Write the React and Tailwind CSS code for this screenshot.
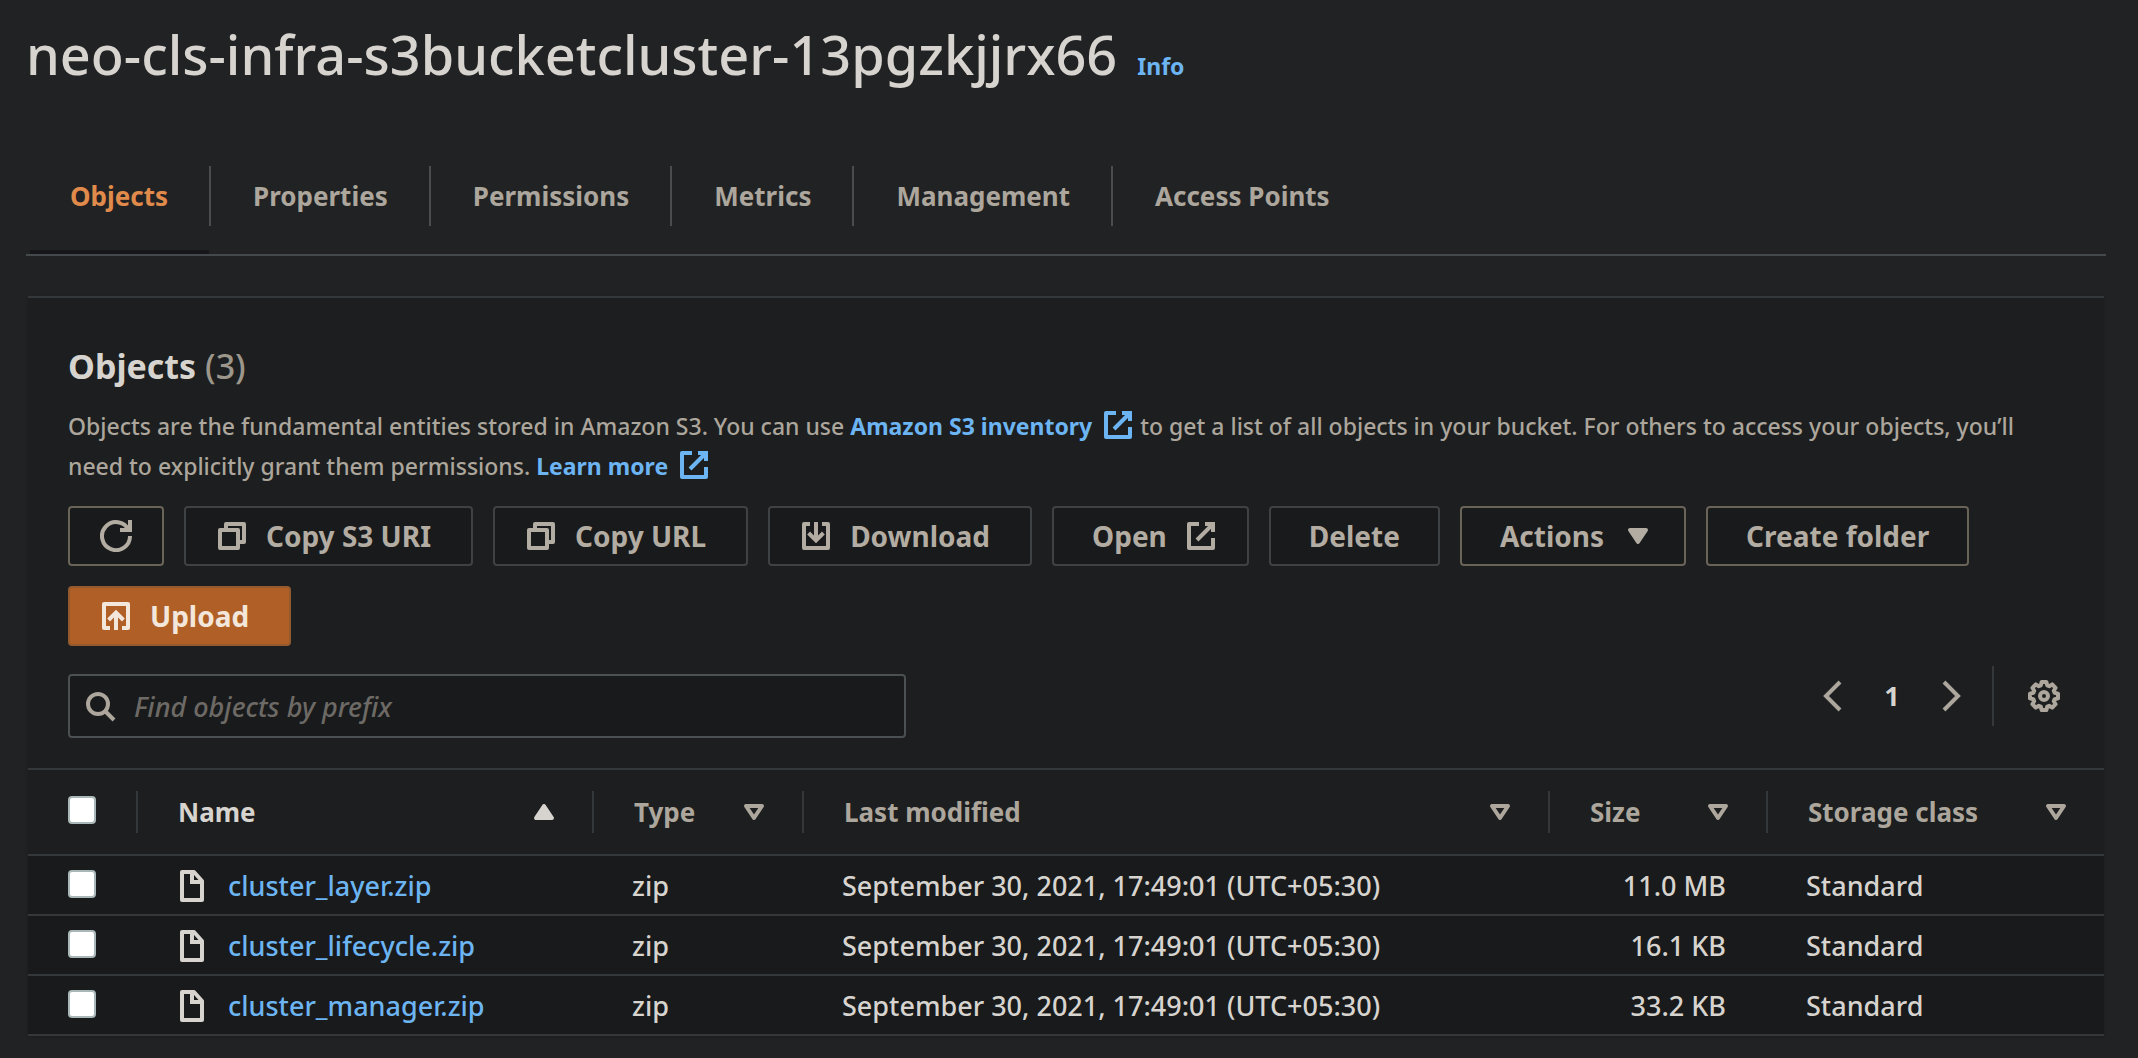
import { useState } from "react";

const TABS = ["Objects", "Properties", "Permissions", "Metrics", "Management", "Access Points"];

const COLUMNS = [
  { label: "Name", sorted: true },
  { label: "Type" },
  { label: "Last modified" },
  { label: "Size" },
  { label: "Storage class" },
];

const OBJECTS = [
  { name: "cluster_layer.zip", type: "zip", modified: "September 30, 2021, 17:49:01 (UTC+05:30)", size: "11.0 MB", storage: "Standard" },
  { name: "cluster_lifecycle.zip", type: "zip", modified: "September 30, 2021, 17:49:01 (UTC+05:30)", size: "16.1 KB", storage: "Standard" },
  { name: "cluster_manager.zip", type: "zip", modified: "September 30, 2021, 17:49:01 (UTC+05:30)", size: "33.2 KB", storage: "Standard" },
];

function Icon({ children, className = "" }) {
  return (
    <svg
      viewBox="0 0 16 16"
      fill="none"
      stroke="currentColor"
      strokeWidth="2"
      aria-hidden="true"
      className={`size-8 shrink-0 ${className}`}
    >
      {children}
    </svg>
  );
}

const RefreshIcon = () => (
  <Icon>
    <path d="M10 5h5V0" />
    <path d="M15 8a7 7 0 1 1-.7-3" />
  </Icon>
);

const CopyIcon = () => (
  <Icon>
    <path d="M2 5h9v9H2z" strokeLinejoin="round" />
    <path d="M5 5V2h9v9h-3" strokeLinejoin="round" />
  </Icon>
);

const DownloadIcon = () => (
  <Icon>
    <path d="M5 2H2v12h12V2h-3" strokeLinejoin="round" />
    <path d="M8 1v9M4.300 6.500 8 10.200l3.700-3.700" />
  </Icon>
);

const UploadIcon = () => (
  <Icon>
    <path d="M5 14H2V2h12v12h-3" strokeLinejoin="round" />
    <path d="M8 15V6.500M4.300 10 8 6.300l3.700 3.700" />
  </Icon>
);

const ExternalIcon = ({ className }) => (
  <Icon className={className}>
    <path d="M7 2H2v12h12V9" strokeLinejoin="round" />
    <path d="M10 2h4v4M6 10l8-8" />
  </Icon>
);

const CaretIcon = ({ up, filled }) => (
  <Icon>
    <path
      d={up ? "M4 11h8L8 5z" : "M4 5h8l-4 6z"}
      fill={filled ? "currentColor" : "none"}
      strokeLinejoin="round"
    />
  </Icon>
);

const SearchIcon = ({ className }) => (
  <Icon className={className}>
    <circle cx="7" cy="7" r="5" />
    <path d="m15 15-4.500-4.500" />
  </Icon>
);

const FileIcon = () => (
  <Icon>
    <path d="M13 15H3V1h6l4 4.500z" strokeLinejoin="round" />
    <path d="M8 1v5h5" />
  </Icon>
);

const GearIcon = () => (
  <Icon>
    <circle cx="8" cy="8" r="2" />
    <path
      d="M6.800 1h2.400l.4 1.700 1 .4 1.500-.9 1.700 1.700-.9 1.500.4 1 1.700.4v2.400l-1.700.4-.4 1 .9 1.500-1.700 1.700-1.500-.9-1 .4-.4 1.700H6.800l-.4-1.700-1-.4-1.500.9-1.700-1.700.9-1.500-.4-1L1 9.200V6.800l1.700-.4.4-1-.9-1.500 1.700-1.700 1.500.9 1-.4z"
      strokeLinejoin="round"
    />
  </Icon>
);

function Button({ children, disabled, className = "", ...props }) {
  return (
    <button
      type="button"
      disabled={disabled}
      className={`flex h-15 items-center gap-[18px] rounded-sm border-2 bg-[#191a1b] text-[28px] font-bold text-[#b2aca2] ${
        disabled ? "border-[#3f4244]" : "border-[#696358]"
      } ${className}`}
      {...props}
    >
      {children}
    </button>
  );
}

function Checkbox({ label }) {
  return (
    <input
      type="checkbox"
      aria-label={label}
      className="block size-7 appearance-none rounded-sm border-2 border-[#aab7b8] bg-white checked:bg-[#6cb5f2]"
    />
  );
}

export default function App() {
  const [tab, setTab] = useState("Objects");
  const [prefix, setPrefix] = useState("");

  const rows = OBJECTS.filter((o) => o.name.startsWith(prefix));

  return (
    <div className="min-h-screen bg-[#212224] pr-8 pl-[26px] font-['Noto_Sans',sans-serif] font-medium text-[#d7d4cf]">
      <header className="flex items-baseline gap-5 pt-[18px]">
        <h1 className="text-[54px] leading-[72px] font-medium">neo-cls-infra-s3bucketcluster-13pgzkjjrx66</h1>
        <a href="#info" className="text-[23px] font-bold text-[#6cb5f2]">
          Info
        </a>
      </header>

      <nav role="tablist" className="mt-[76px] flex border-b-2 border-[#444a4c]">
        {TABS.map((t) => (
          <button
            key={t}
            type="button"
            role="tab"
            aria-selected={t === tab}
            onClick={() => setTab(t)}
            className={`group ml-1 flex h-[88px] items-start border-b-4 text-[26px] font-bold ${
              t === tab ? "border-[#16171b] text-[#e08a4b]" : "border-transparent text-[#aca69c]"
            }`}
          >
            <span className="-mr-[2px] flex h-15 items-center border-r-2 border-[#4a4c4d] pr-[41px] pl-10 group-last:border-transparent">
              {t}
            </span>
          </button>
        ))}
      </nav>

      <main className="mt-10 mr-[2px] ml-[2px] border-t-2 border-[#35383a] bg-[#1c1e1f] shadow-sm">
        <div className="px-10 pt-[42px]">
          <h2 className="text-[34px] leading-[52px] font-bold">
            Objects <span className="font-medium text-[#9c968b]">(3)</span>
          </h2>
          <p className="mt-[14px] text-[23px] leading-10 text-[#aca69c]">
            Objects are the fundamental entities stored in Amazon S3. You can use{" "}
            <a href="#inventory" className="font-bold text-[#6cb5f2]">
              Amazon S3 inventory <ExternalIcon className="-mt-1 mb-1 ml-1 inline" />
            </a>{" "}
            to get a list of all objects in your bucket. For others to access your objects, you’ll need to
            explicitly grant them permissions.{" "}
            <a href="#learn" className="font-bold text-[#6cb5f2]">
              Learn more <ExternalIcon className="-mt-1 mb-1 ml-1 inline" />
            </a>
          </p>

          <div className="mt-5 flex flex-wrap gap-5">
            <Button aria-label="Refresh" className="px-[30px]">
              <RefreshIcon />
            </Button>
            <Button disabled className="pr-10 pl-[30px]">
              <CopyIcon />
              Copy S3 URI
            </Button>
            <Button disabled className="pr-10 pl-[30px]">
              <CopyIcon />
              Copy URL
            </Button>
            <Button disabled className="pr-10 pl-[30px]">
              <DownloadIcon />
              Download
            </Button>
            <Button disabled className="pr-[30px] pl-[38px]">
              Open
              <ExternalIcon />
            </Button>
            <Button disabled className="px-[38px]">
              Delete
            </Button>
            <Button className="pr-[30px] pl-[38px]">
              Actions
              <CaretIcon filled />
            </Button>
            <Button className="px-[38px]">Create folder</Button>
            <button
              type="button"
              className="flex h-15 items-center gap-[18px] rounded-sm border-2 border-[#94592d] bg-[#b06027] pr-10 pl-[30px] text-[28px] font-bold text-[#f3e6db]"
            >
              <UploadIcon />
              Upload
            </button>
          </div>

          <div className="mt-5 flex items-start justify-between pb-[30px]">
            <label className="mt-2 flex h-16 w-[838px] items-center gap-[18px] rounded-sm border-2 border-[#4b5052] bg-[#191a1b] px-[14px]">
              <SearchIcon className="text-[#aca69c]" />
              <input
                type="text"
                aria-label="Find objects by prefix"
                value={prefix}
                onChange={(e) => setPrefix(e.target.value)}
                placeholder="Find objects by prefix"
                className="min-w-0 flex-1 bg-transparent pt-[2px] text-[27px] outline-none placeholder:text-[#6d6a66] placeholder:italic"
              />
            </label>
            <div className="flex h-15 items-center text-[#aca69c]">
              <button type="button" aria-label="Previous page">
                <Icon>
                  <path d="M12 1 5 8l7 7" />
                </Icon>
              </button>
              <span className="w-[88px] text-center text-[27px] font-bold text-[#d7d4cf]">1</span>
              <button type="button" aria-label="Next page">
                <Icon>
                  <path d="m4 1 7 7-7 7" />
                </Icon>
              </button>
              <span className="ml-6 h-full w-[2px] bg-[#35383a]" />
              <button type="button" aria-label="Preferences" className="mr-1 ml-[34px]">
                <GearIcon />
              </button>
            </div>
          </div>
        </div>

        <table className="w-full table-fixed border-t-2 border-[#35383a] text-left text-[27px]">
          <colgroup>
            <col className="w-[110px]" />
            <col className="w-[456px]" />
            <col className="w-[210px]" />
            <col />
            <col className="w-[218px]" />
            <col className="w-[336px]" />
          </colgroup>
          <thead className="text-[26px]">
            <tr className="h-[86px] border-b-2 border-[#35383a]">
              <th className="p-0">
                <div className="flex h-[42px] items-center border-r-2 border-[#35383a] pb-1 pl-10">
                  <Checkbox label="Select all" />
                </div>
              </th>
              {COLUMNS.map((c) => (
                <th key={c.label} className="group p-0" aria-sort={c.sorted ? "ascending" : undefined}>
                  <div
                    className={`flex h-[42px] items-center justify-between border-r-2 border-[#35383a] pr-8 pl-10 group-last:border-r-0 ${
                      c.sorted ? "text-[#d7d4cf]" : "text-[#aca69c]"
                    }`}
                  >
                    {c.label}
                    <CaretIcon up={c.sorted} filled={c.sorted} />
                  </div>
                </th>
              ))}
            </tr>
          </thead>
          <tbody className="bg-[#191a1b]">
            {rows.map((o) => (
              <tr key={o.name} className="h-15 border-b-2 border-[#35383a]">
                <td className="p-0 pb-[2px] pl-10">
                  <Checkbox label={`Select ${o.name}`} />
                </td>
                <td className="p-0 pt-[2px] pl-[38px]">
                  <a href={`#${o.name}`} className="flex items-center gap-5 text-[#6cb5f2]">
                    <span className="text-[#d7d4cf]">
                      <FileIcon />
                    </span>
                    {o.name}
                  </a>
                </td>
                <td className="p-0 pt-[2px] pl-[38px]">{o.type}</td>
                <td className="p-0 pt-[2px] pl-[38px]">{o.modified}</td>
                <td className="p-0 pt-[2px] pr-[42px] text-right">{o.size}</td>
                <td className="p-0 pt-[2px] pl-[38px]">{o.storage}</td>
              </tr>
            ))}
          </tbody>
        </table>
      </main>
    </div>
  );
}
